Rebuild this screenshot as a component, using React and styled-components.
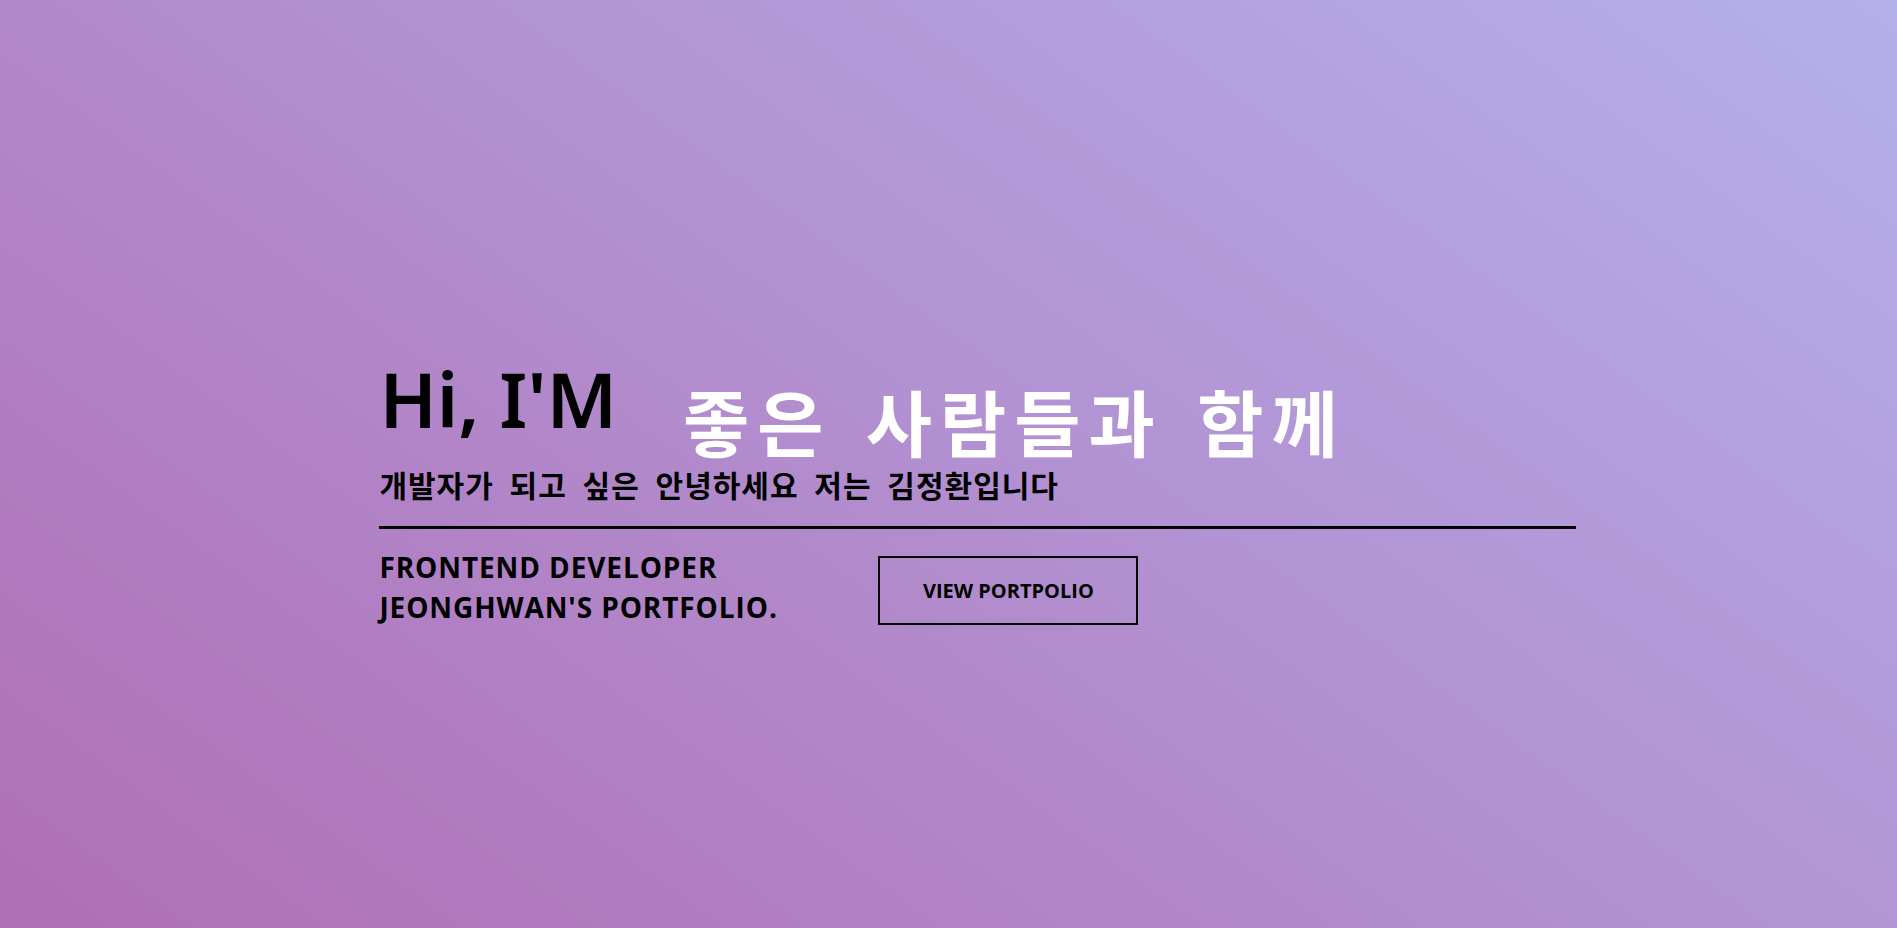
import React from "react";
import styled, { createGlobalStyle } from "styled-components";

const GlobalStyle = createGlobalStyle`
  * {
    box-sizing: border-box;
  }

  body {
    margin: 0;
    font-family: "Open Sans", "Noto Sans CJK KR", sans-serif;
    color: #000;
  }
`;

const Hero = styled.section`
  height: 100vh;
  min-height: 928px;
  padding: 356px 0 0 20%;
  background: linear-gradient(36deg, #b06eb6 0%, #b28fd0 50%, #b4b0ec 100%);
`;

const Inner = styled.div`
  width: 1197px;
`;

const TitleRow = styled.div`
  display: flex;
  align-items: flex-end;
  height: 100px;
`;

const Greeting = styled.h1`
  margin: 0 0 19px;
  font-family: "Noto Sans", sans-serif;
  font-size: 76px;
  font-weight: 600;
  line-height: 1;
  white-space: nowrap;
`;

const Typing = styled.span`
  margin-left: 66px;
  font-family: "Noto Sans CJK KR", sans-serif;
  font-size: 72px;
  font-weight: 700;
  line-height: 1;
  letter-spacing: 8px;
  word-spacing: 10px;
  color: #fff;
  white-space: nowrap;
`;

const Subtitle = styled.p`
  margin: 12px 0 0;
  font-size: 30px;
  font-weight: 700;
  line-height: 1.2;
  letter-spacing: 1px;
  word-spacing: 7px;
`;

const Divider = styled.hr`
  margin: 22px 0 0;
  border: 0;
  border-top: 3px solid #000;
`;

const BottomRow = styled.div`
  display: flex;
  align-items: flex-start;
  margin-top: 18px;
`;

const Tagline = styled.p`
  width: 499px;
  margin: 0;
  font-size: 28px;
  font-weight: 700;
  line-height: 40px;
  letter-spacing: 0.9px;
`;

const OutlineButton = styled.button`
  width: 260px;
  height: 69px;
  margin-top: 9px;
  border: 2px solid #000;
  background: transparent;
  font-family: "Open Sans", sans-serif;
  font-size: 20px;
  font-weight: 700;
  color: #000;
  cursor: pointer;
`;

const App = () => (
  <>
    <GlobalStyle />
    <Hero>
      <Inner>
        <TitleRow>
          <Greeting>Hi, I'M</Greeting>
          <Typing>좋은 사람들과 함께</Typing>
        </TitleRow>
        <Subtitle>개발자가 되고 싶은 안녕하세요 저는 김정환입니다</Subtitle>
        <Divider />
        <BottomRow>
          <Tagline>
            FRONTEND DEVELOPER
            <br />
            JEONGHWAN'S PORTFOLIO.
          </Tagline>
          <OutlineButton>VIEW PORTPOLIO</OutlineButton>
        </BottomRow>
      </Inner>
    </Hero>
  </>
);

export default App;
